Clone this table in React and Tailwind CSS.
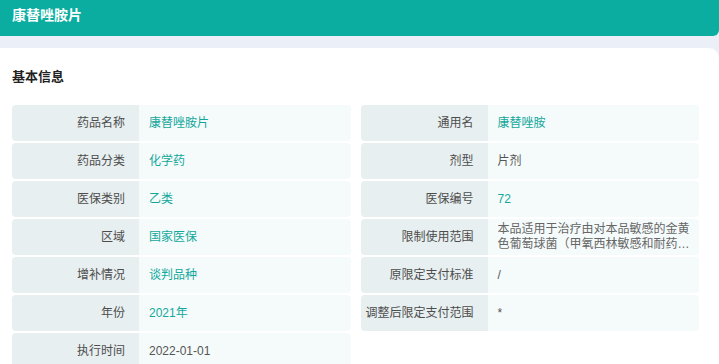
const rows = [
  { label: "药品名称", value: "康替唑胺片", link: true },
  { label: "通用名", value: "康替唑胺", link: true },
  { label: "药品分类", value: "化学药", link: true },
  { label: "剂型", value: "片剂" },
  { label: "医保类别", value: "乙类", link: true },
  { label: "医保编号", value: "72", link: true },
  { label: "区域", value: "国家医保", link: true },
  {
    label: "限制使用范围",
    value:
      "本品适用于治疗由对本品敏感的金黄色葡萄球菌（甲氧西林敏感和耐药的菌株）、化脓性链球菌或无乳链球菌引起的复杂性皮肤和软组织感染",
    clamp: true,
  },
  { label: "增补情况", value: "谈判品种", link: true },
  { label: "原限定支付标准", value: "/" },
  { label: "年份", value: "2021年", link: true },
  { label: "调整后限定支付范围", value: "*" },
  { label: "执行时间", value: "2022-01-01" },
];

function InfoRow({ label, value, link, clamp }) {
  return (
    <div className="flex h-[36px] overflow-hidden rounded-[4px]">
      <div className="flex w-[127px] shrink-0 items-center justify-end bg-[#e7eff0] pr-[14px] text-[#4d4d4d]">
        {label}
      </div>
      <div className="flex flex-1 items-center bg-[#f5fbfb] pl-[10px] pr-2">
        {clamp ? (
          <p className="line-clamp-2 leading-[15px] text-[#666]">{value}</p>
        ) : (
          <span className={link ? "text-[#13a89b]" : "text-[#555]"}>{value}</span>
        )}
      </div>
    </div>
  );
}

export default function App() {
  return (
    <div
      className="h-[364px] overflow-hidden bg-[#ebeff7] text-[12px]"
      style={{ fontFamily: '"Liberation Sans", "Noto Sans CJK SC", sans-serif' }}
    >
      {/* top title bar */}
      <div className="flex h-[36px] items-center rounded-br-[6px] bg-[#0aad9f] px-3 pb-[6px]">
        <h1 className="text-[14px] font-bold text-white">康替唑胺片</h1>
      </div>

      <div className="mt-3 h-full rounded-tr-[10px] bg-white pl-3 pr-5 pt-[19px]">
        <h2 className="text-[13px] font-bold leading-[20px] text-[#222]">基本信息</h2>

        <div className="mt-[18px] grid grid-cols-2 gap-x-[10px] gap-y-[2px]">
          {rows.map((r) => (
            <InfoRow key={r.label} {...r} />
          ))}
        </div>
      </div>
    </div>
  );
}
